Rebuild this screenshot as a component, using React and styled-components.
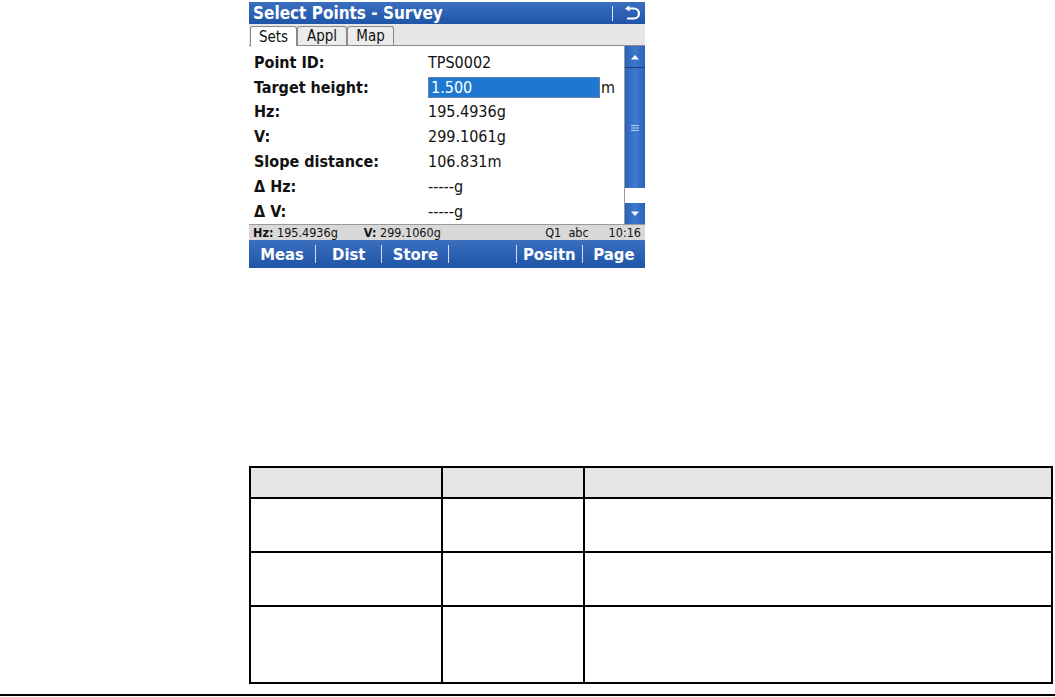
import styled, { createGlobalStyle } from 'styled-components';

const GlobalStyle = createGlobalStyle`
    html, body {
        margin: 0;
        padding: 0;
        background: #fff;
    }
`

const Page = styled.div`
    width: 1055px;
    height: 697px;
    display: flex;
    flex-direction: column;
    font-family: "DejaVu Sans Condensed", "DejaVu Sans", sans-serif;
`

const Device = styled.div`
    width: 396px;
    margin: 2px 0 0 249px;
    display: flex;
    flex-direction: column;
`

const TitleBar = styled.div`
    height: 22px;
    display: flex;
    align-items: center;
    padding: 0 4px 0 4px;
    background: linear-gradient(#3a6fc0, #1f55a8);
    color: #fff;
    font-weight: bold;
    font-size: 17px;
`

const Title = styled.div`
    flex: 1;
`

const TitleSep = styled.div`
    width: 1px;
    height: 15px;
    background: #dfe8f6;
    margin-right: 10px;
`

const TabRow = styled.div`
    height: 21px;
    display: flex;
    align-items: flex-end;
    background: #e6e6e6;
    border-bottom: 1px solid #8a8a8a;
    padding-left: 1px;
`

const Tab = styled.div`
    width: ${({ $w }) => $w}px;
    height: ${({ $active }) => ($active ? '20px' : '19px')};
    display: flex;
    align-items: center;
    justify-content: center;
    box-sizing: border-box;
    font-size: 15px;
    color: #111;
    background: ${({ $active }) => ($active ? '#fff' : '#ececec')};
    border: 1px solid #8a8a8a;
    border-bottom: none;
    border-radius: 3px 3px 0 0;
    margin-bottom: ${({ $active }) => ($active ? '-1px' : '0')};
`

const Body = styled.div`
    height: 178px;
    display: flex;
    background: #fff;
`

const Fields = styled.div`
    flex: 1;
    display: flex;
    flex-direction: column;
    padding: 4px 0 0 5px;
`

const Row = styled.div`
    height: 24.8px;
    display: flex;
    align-items: center;
    font-size: 16px;
    color: #111;
`

const Label = styled.div`
    width: 174px;
    font-weight: bold;
`

const Value = styled.div``

const Input = styled.div`
    width: 168px;
    height: 19px;
    display: flex;
    align-items: center;
    padding-left: 2px;
    background: #1e78d2;
    border: 1px solid #6a7fa6;
    color: #fff;
`

const Unit = styled.div`
    margin-left: 1px;
`

const ScrollBar = styled.div`
    width: 20px;
    display: flex;
    flex-direction: column;
    border-left: 1px solid #9a9a9a;
`

const ScrollBtn = styled.div`
    height: 21px;
    display: flex;
    align-items: center;
    justify-content: center;
    background: linear-gradient(90deg, #2a62b8, #3c78cc, #2a62b8);
`

const Thumb = styled.div`
    height: 120px;
    display: flex;
    align-items: center;
    justify-content: center;
    background: linear-gradient(90deg, #2a62b8, #3f7bd0, #2a62b8);
    border-top: 1px solid #1a3f7a;
`

const Track = styled.div`
    flex: 1;
    background: #fff;
`

const StatusBar = styled.div`
    height: 15px;
    display: flex;
    align-items: center;
    padding: 0 4px;
    background: #d8d8d8;
    border-top: 1px solid #9a9a9a;
    font-size: 12.5px;
    color: #111;
`

const StatusItem = styled.span`
    margin-right: ${({ $gap }) => $gap || 0}px;
    & b {
        font-weight: bold;
    }
`

const Spacer = styled.div`
    flex: 1;
`

const SoftKeys = styled.div`
    height: 28px;
    display: flex;
    align-items: center;
    background: linear-gradient(#3a6fc0, #1f55a8);
    color: #fff;
    font-weight: bold;
    font-size: 16.5px;
`

const Key = styled.div`
    width: ${({ $w }) => $w}px;
    height: 18px;
    display: flex;
    align-items: center;
    justify-content: center;
    border-right: ${({ $last }) => ($last ? 'none' : '1px solid #d4def0')};
`

const Gap = styled.div`
    height: 198px;
`

const Table = styled.table`
    margin-left: 249px;
    width: 804px;
    border-collapse: collapse;
    table-layout: fixed;

    & td, & th {
        border: 2px solid #000;
        padding: 0;
    }
`

const HeadRow = styled.tr`
    height: 31px;
    background: #e5e5e5;
`

const BodyRow = styled.tr`
    height: ${({ $h }) => $h}px;
`

const Rule = styled.div`
    margin-top: 10px;
    height: 2px;
    background: #000;
`

const UpArrow = () => (
    <svg width="10" height="6" viewBox="0 0 10 6">
        <path d="M1 5.5 L5 1 L9 5.5 Z" fill="#fff" />
    </svg>
)

const DownArrow = () => (
    <svg width="10" height="6" viewBox="0 0 10 6">
        <path d="M1 0.5 L5 5 L9 0.5 Z" fill="#fff" />
    </svg>
)

const Grip = () => (
    <svg width="10" height="8" viewBox="0 0 10 8">
        <path d="M1 1.5 H9 M1 4 H9 M1 6.5 H9" stroke="#bcd2f0" strokeWidth="1" />
    </svg>
)

const BackIcon = () => (
    <svg width="18" height="16" viewBox="0 0 18 16">
        <path d="M5 3.5 H11 A5 5 0 0 1 11 13.5 H4" fill="none" stroke="#fff" strokeWidth="2.2" />
        <path d="M2 3.5 L6.5 0.5 V6.5 Z" fill="#fff" />
    </svg>
)

const fields = [
    { label: 'Point ID:', value: 'TPS0002' },
    { label: 'Target height:', value: '1.500', input: true },
    { label: 'Hz:', value: '195.4936g' },
    { label: 'V:', value: '299.1061g' },
    { label: 'Slope distance:', value: '106.831m' },
    { label: 'Δ Hz:', value: '-----g' },
    { label: 'Δ V:', value: '-----g' },
]

const tabs = [
    { label: 'Sets', w: 47, active: true },
    { label: 'Appl', w: 50 },
    { label: 'Map', w: 47 },
]

const keys = [
    { label: 'Meas', w: 67 },
    { label: 'Dist', w: 66 },
    { label: 'Store', w: 67 },
    { label: '', w: 67 },
    { label: 'Positn', w: 66 },
    { label: 'Page', w: 63, last: true },
]

const App = () => (
    <Page>
        <GlobalStyle />
        <Device>
            <TitleBar>
                <Title>Select Points - Survey</Title>
                <TitleSep />
                <BackIcon />
            </TitleBar>
            <TabRow>
                {tabs.map((t) => (
                    <Tab key={t.label} $w={t.w} $active={t.active}>{t.label}</Tab>
                ))}
            </TabRow>
            <Body>
                <Fields>
                    {fields.map((f) => (
                        <Row key={f.label}>
                            <Label>{f.label}</Label>
                            {f.input ? (
                                <>
                                    <Input>{f.value}</Input>
                                    <Unit>m</Unit>
                                </>
                            ) : (
                                <Value>{f.value}</Value>
                            )}
                        </Row>
                    ))}
                </Fields>
                <ScrollBar>
                    <ScrollBtn><UpArrow /></ScrollBtn>
                    <Thumb><Grip /></Thumb>
                    <Track />
                    <ScrollBtn><DownArrow /></ScrollBtn>
                </ScrollBar>
            </Body>
            <StatusBar>
                <StatusItem $gap={26}><b>Hz:</b> 195.4936g</StatusItem>
                <StatusItem><b>V:</b> 299.1060g</StatusItem>
                <Spacer />
                <StatusItem $gap={20}>Q1&nbsp;&nbsp;abc</StatusItem>
                <StatusItem>10:16</StatusItem>
            </StatusBar>
            <SoftKeys>
                {keys.map((k, i) => (
                    <Key key={i} $w={k.w} $last={k.last}>{k.label}</Key>
                ))}
            </SoftKeys>
        </Device>
        <Gap />
        <Table>
            <colgroup>
                <col style={{ width: 192 }} />
                <col style={{ width: 142 }} />
                <col />
            </colgroup>
            <tbody>
                <HeadRow><th /><th /><th /></HeadRow>
                <BodyRow $h={54}><td /><td /><td /></BodyRow>
                <BodyRow $h={54}><td /><td /><td /></BodyRow>
                <BodyRow $h={77}><td /><td /><td /></BodyRow>
            </tbody>
        </Table>
        <Rule />
    </Page>
)

export default App;
